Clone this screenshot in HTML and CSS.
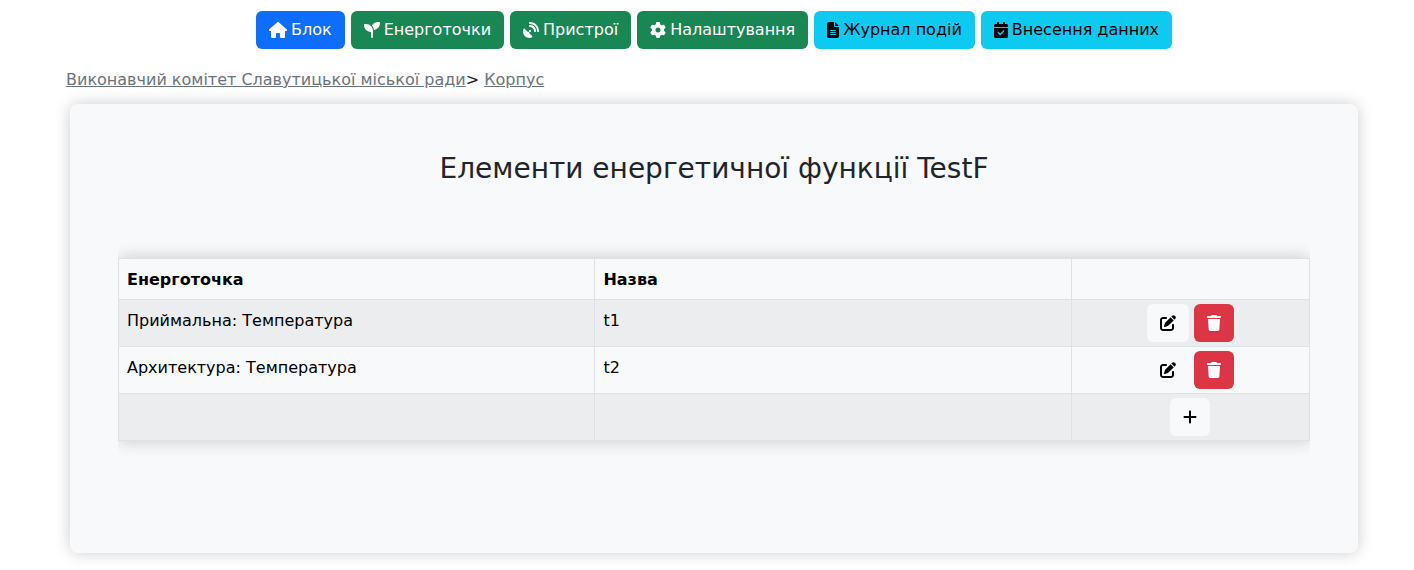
FILE: index.html
```html
<!DOCTYPE html>
<html lang="uk">
<head>
    <meta charset="UTF-8">
    <meta name="viewport" content="width=device-width, initial-scale=1.0">
    <title>Елементи енергетичної функції</title>
    <link rel="stylesheet" href="styles.css">
</head>
<body>
    <!-- Іконки -->
    <svg class="sprite" aria-hidden="true">
        <symbol id="pen" viewBox="0 0 512 512"><path d="M471.6 21.7c-21.9-21.9-57.3-21.9-79.2 0L362.3 51.7l97.9 97.9 30.1-30.1c21.9-21.9 21.9-57.3 0-79.2L471.6 21.7zm-299.2 220c-6.1 6.1-10.8 13.6-13.5 21.9l-29.6 88.8c-2.9 8.6-.6 18.1 5.8 24.6s15.9 8.7 24.6 5.8l88.8-29.6c8.2-2.7 15.7-7.4 21.9-13.5L437.7 172.3 339.7 74.3 172.4 241.7zM96 64C43 64 0 107 0 160V416c0 53 43 96 96 96H352c53 0 96-43 96-96V320c0-17.7-14.3-32-32-32s-32 14.3-32 32v96c0 17.7-14.3 32-32 32H96c-17.7 0-32-14.3-32-32V160c0-17.7 14.3-32 32-32h96c17.7 0 32-14.3 32-32s-14.3-32-32-32H96z"/></symbol>
        <symbol id="trash" viewBox="0 0 448 512"><path d="M135.2 17.7L128 32H32C14.3 32 0 46.3 0 64S14.3 96 32 96H416c17.7 0 32-14.3 32-32s-14.3-32-32-32H320l-7.2-14.3C307.4 6.8 296.3 0 284.2 0H163.8c-12.1 0-23.2 6.8-28.6 17.7zM416 128H32L53.2 467c1.6 25.3 22.6 45 47.9 45H346.9c25.3 0 46.3-19.7 47.9-45L416 128z"/></symbol>
    </svg>

    <nav class="menu">
        <a href="#" class="btn btn-primary">
            <svg class="icon icon-wide" viewBox="0 0 576 512"><path d="M575.8 255.5c0 18-15 32.1-32 32.1h-32l.7 160.2c0 2.7-.2 5.4-.5 8.1V472c0 22.1-17.9 40-40 40H456c-1.1 0-2.2 0-3.3-.1c-1.4 .1-2.8 .1-4.2 .1H416 392c-22.1 0-40-17.9-40-40V448 384c0-17.7-14.3-32-32-32H256c-17.7 0-32 14.3-32 32v64 24c0 22.1-17.9 40-40 40H160 128.1c-1.5 0-3-.1-4.5-.2c-1.2 .1-2.4 .2-3.6 .2H104c-22.1 0-40-17.9-40-40V360c0-.9 0-1.9 .1-2.8V287.6H32c-18 0-32-14-32-32.1c0-9 3-17 10-24L266.4 8c7-7 15-8 22-8s15 2 21 7L564.8 231.5c8 7 12 15 11 24z"/></svg>
            Блок
        </a>
        <a href="#" class="btn btn-success">
            <svg class="icon" viewBox="0 0 512 512"><path d="M512 32c0 113.6-84.6 207.5-194.2 222c-7.1-53.4-30.6-101.6-65.3-139.3C290.8 46.3 364 0 448 0h32c17.7 0 32 14.3 32 32zM0 96C0 78.3 14.3 64 32 64H64c123.7 0 224 100.3 224 224v32V480c0 17.7-14.3 32-32 32s-32-14.3-32-32V320C100.3 320 0 219.7 0 96z"/></svg>
            Енерготочки
        </a>
        <a href="#" class="btn btn-success">
            <svg class="icon" viewBox="0 0 512 512"><path d="M192 32c0-17.7 14.3-32 32-32C383.1 0 512 128.9 512 288c0 17.7-14.3 32-32 32s-32-14.3-32-32C448 164.3 347.7 64 224 64c-17.7 0-32-14.3-32-32zM60.6 220.6L164.7 324.7l28.4-28.4c-.7-2.6-1.1-5.4-1.1-8.3c0-17.7 14.3-32 32-32s32 14.3 32 32s-14.3 32-32 32c-2.9 0-5.6-.4-8.3-1.1l-28.4 28.4L291.4 451.4c14.5 14.5 11.8 38.8-7.3 46.3C260.5 506.9 234.9 512 208 512C93.1 512 0 418.9 0 304c0-26.9 5.1-52.5 14.4-76.1c7.5-19 31.8-21.8 46.3-7.3zM224 96c106 0 192 86 192 192c0 17.7-14.3 32-32 32s-32-14.3-32-32c0-70.7-57.3-128-128-128c-17.7 0-32-14.3-32-32s14.3-32 32-32z"/></svg>
            Пристрої
        </a>
        <a href="#" class="btn btn-success">
            <svg class="icon" viewBox="0 0 512 512"><path d="M495.9 166.6c3.2 8.7 .5 18.4-6.4 24.6l-43.3 39.4c1.1 8.3 1.7 16.8 1.7 25.4s-.6 17.1-1.7 25.4l43.3 39.4c6.9 6.2 9.6 15.9 6.4 24.6c-4.4 11.9-9.7 23.3-15.8 34.3l-4.7 8.1c-6.6 11-14 21.4-22.1 31.2c-5.9 7.2-15.7 9.6-24.5 6.8l-55.7-17.7c-13.4 10.3-28.2 18.9-44 25.4l-12.5 57.1c-2 9.1-9 16.3-18.2 17.8c-13.8 2.3-28 3.5-42.5 3.5s-28.7-1.2-42.5-3.5c-9.2-1.5-16.2-8.7-18.2-17.8l-12.5-57.1c-15.8-6.5-30.6-15.1-44-25.4L83.1 425.9c-8.8 2.8-18.6 .3-24.5-6.8c-8.1-9.8-15.5-20.2-22.1-31.2l-4.7-8.1c-6.1-11-11.4-22.4-15.8-34.3c-3.2-8.7-.5-18.4 6.4-24.6l43.3-39.4C64.6 273.1 64 264.6 64 256s.6-17.1 1.7-25.4L22.4 191.2c-6.9-6.2-9.6-15.9-6.4-24.6c4.4-11.9 9.7-23.3 15.8-34.3l4.7-8.1c6.6-11 14-21.4 22.1-31.2c5.9-7.2 15.7-9.6 24.5-6.8l55.7 17.7c13.4-10.3 28.2-18.9 44-25.4l12.5-57.1c2-9.1 9-16.3 18.2-17.8C227.3 1.2 241.5 0 256 0s28.7 1.2 42.5 3.5c9.2 1.5 16.2 8.7 18.2 17.8l12.5 57.1c15.8 6.5 30.6 15.1 44 25.4l55.7-17.7c8.8-2.8 18.6-.3 24.5 6.8c8.1 9.8 15.5 20.2 22.1 31.2l4.7 8.1c6.1 11 11.4 22.4 15.8 34.3zM256 336a80 80 0 1 0 0-160 80 80 0 1 0 0 160z"/></svg>
            Налаштування
        </a>
        <a href="#" class="btn btn-info">
            <svg class="icon icon-file" viewBox="0 0 384 512"><path d="M64 0C28.7 0 0 28.7 0 64V448c0 35.3 28.7 64 64 64H320c35.3 0 64-28.7 64-64V160H256c-17.7 0-32-14.3-32-32V0H64zM256 0V128H384L256 0zM112 256H272c8.8 0 16 7.2 16 16s-7.2 16-16 16H112c-8.8 0-16-7.2-16-16s7.2-16 16-16zm0 64H272c8.8 0 16 7.2 16 16s-7.2 16-16 16H112c-8.8 0-16-7.2-16-16s7.2-16 16-16zm0 64H272c8.8 0 16 7.2 16 16s-7.2 16-16 16H112c-8.8 0-16-7.2-16-16s7.2-16 16-16z"/></svg>
            Журнал подій
        </a>
        <a href="#" class="btn btn-info">
            <svg class="icon icon-narrow" viewBox="0 0 448 512"><path d="M128 0c17.7 0 32 14.3 32 32V64H288V32c0-17.7 14.3-32 32-32s32 14.3 32 32V64h48c26.5 0 48 21.5 48 48v48H0V112C0 85.5 21.5 64 48 64H96V32c0-17.7 14.3-32 32-32zM0 192H448V464c0 26.5-21.5 48-48 48H48c-26.5 0-48-21.5-48-48V192zM329 305c9.4-9.4 9.4-24.6 0-33.9s-24.6-9.4-33.9 0l-95 95-47-47c-9.4-9.4-24.6-9.4-33.9 0s-9.4 24.6 0 33.9l64 64c9.4 9.4 24.6 9.4 33.9 0L329 305z"/></svg>
            Внесення данних
        </a>
    </nav>

    <div class="breadcrumbs">
        <a href="#">Виконавчий комітет Славутицької міської ради</a>&gt; <a href="#">Корпус</a>
    </div>

    <main class="card">
        <h1>Елементи енергетичної функції TestF</h1>

        <div class="table-wrap">
            <table>
                <thead>
                    <tr>
                        <th class="col-point">Енерготочка</th>
                        <th class="col-name">Назва</th>
                        <th class="col-actions"></th>
                    </tr>
                </thead>
                <tbody>
                    <tr>
                        <td>Приймальна: Температура</td>
                        <td>t1</td>
                        <td class="actions">
                            <button type="button" class="btn btn-light" aria-label="Редагувати"><svg class="icon"><use href="#pen"/></svg></button>
                            <button type="button" class="btn btn-danger" aria-label="Видалити"><svg class="icon icon-narrow"><use href="#trash"/></svg></button>
                        </td>
                    </tr>
                    <tr>
                        <td>Архитектура: Температура</td>
                        <td>t2</td>
                        <td class="actions">
                            <button type="button" class="btn btn-light" aria-label="Редагувати"><svg class="icon"><use href="#pen"/></svg></button>
                            <button type="button" class="btn btn-danger" aria-label="Видалити"><svg class="icon icon-narrow"><use href="#trash"/></svg></button>
                        </td>
                    </tr>
                    <tr>
                        <td></td>
                        <td></td>
                        <td class="actions">
                            <button type="button" class="btn btn-light" aria-label="Додати"><svg class="icon icon-narrow" viewBox="0 0 448 512"><path d="M256 80c0-17.7-14.3-32-32-32s-32 14.3-32 32V224H48c-17.7 0-32 14.3-32 32s14.3 32 32 32H192V432c0 17.7 14.3 32 32 32s32-14.3 32-32V288H400c17.7 0 32-14.3 32-32s-14.3-32-32-32H256V80z"/></svg></button>
                        </td>
                    </tr>
                </tbody>
            </table>
        </div>
    </main>
</body>
</html>
```
FILE: styles.css
```css
* {
    box-sizing: border-box;
}

body {
    margin: 0;
    padding: 11px 0 16px 14px;
    font-family: Verdana, "DejaVu Sans", sans-serif;
    font-size: 16px;
    line-height: 24px;
    color: #212529;
    background-color: #fff;
}

.sprite {
    display: none;
}

.menu {
    display: flex;
    flex-wrap: wrap;
    justify-content: center;
    gap: 6px;
}

.btn {
    display: inline-flex;
    align-items: center;
    gap: 4px;
    padding: 6px 12px;
    border: 1px solid transparent;
    border-radius: 6px;
    font: inherit;
    text-decoration: none;
    cursor: pointer;
}

.btn-primary {
    color: #fff;
    background-color: #0d6efd;
}

.btn-success {
    color: #fff;
    background-color: #198754;
}

.btn-info {
    color: #000;
    background-color: #0dcaf0;
}

.btn-light {
    color: #000;
    background-color: #f8f9fa;
}

.btn-danger {
    color: #fff;
    background-color: #dc3545;
}

.icon {
    flex: none;
    width: 16px;
    height: 16px;
    fill: currentColor;
}

.icon-wide {
    width: 18px;
}

.icon-narrow {
    width: 14px;
}

.icon-file {
    width: 12px;
}

.breadcrumbs {
    margin: 19px 52px 12px;
}

.breadcrumbs a {
    color: #6c757d;
}

.card {
    margin: 0 56px;
    padding: 48px 48px 96px;
    border-radius: 8px;
    background-color: #f8f9fa;
    box-shadow: 0 0 16px rgba(0, 0, 0, 0.2);
}

h1 {
    margin: 0;
    font-size: 28px;
    font-weight: normal;
    line-height: 34px;
    text-align: center;
}

/* Тінь таблиці обрізається по боках */
.table-wrap {
    margin-top: 56px;
    padding: 16px 0;
    overflow: hidden;
}

table {
    width: 100%;
    table-layout: fixed;
    border-collapse: collapse;
    color: #000;
    box-shadow: 0 0 16px rgba(0, 0, 0, 0.2);
}

th, td {
    padding: 9px 8px 7px;
    border: 1px solid #dee2e6;
    text-align: left;
    vertical-align: top;
    background-color: #f8f9fa;
}

tbody tr:nth-child(odd) td {
    background-color: #ecedee;
}

.col-point, .col-name {
    width: 40%;
}

.col-actions {
    width: 20%;
}

td.actions {
    padding: 4px;
    text-align: center;
}

.actions .btn {
    height: 38px;
    vertical-align: top;
}
```
